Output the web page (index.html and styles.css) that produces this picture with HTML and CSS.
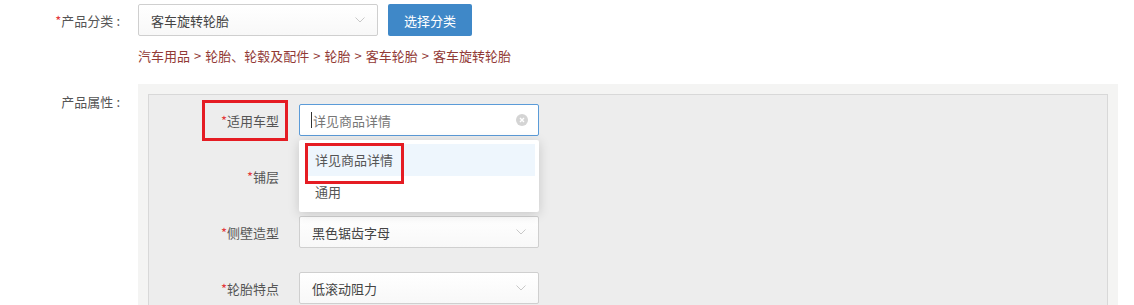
FILE: index.html
```html
<!DOCTYPE html>
<html lang="zh-CN">

<head>
  <meta charset="UTF-8">
  <meta name="viewport" content="width=device-width, initial-scale=1.0">
  <title>产品分类</title>
  <link rel="stylesheet" href="styles.css">
</head>

<body>
  <div class="row category-row">
    <label class="row-label"><i>*</i>产品分类<span class="colon">:</span></label>
    <div class="select wide">
      <span>客车旋转轮胎</span>
      <svg class="chevron" width="10" height="6" viewBox="0 0 10 6"><path d="M0.5 0.5 L5 5 L9.5 0.5" fill="none" stroke="#c8c8c8" stroke-width="1"/></svg>
    </div>
    <button class="btn-primary">选择分类</button>
  </div>
  <div class="crumbs">汽车用品<span class="sep">&gt;</span>轮胎、轮毂及配件<span class="sep">&gt;</span>轮胎<span class="sep">&gt;</span>客车轮胎<span class="sep">&gt;</span>客车旋转轮胎</div>

  <div class="row attr-row">
    <label class="row-label attr-label">产品属性<span class="colon">:</span></label>
    <div class="attr-outer">
      <div class="attr-inner">
        <div class="field">
          <div class="field-label"><i>*</i>适用车型<span class="mark mark-label"></span></div>
          <div class="field-control">
            <div class="select focused">
              <span class="caret"></span><span class="value-muted">详见商品详情</span>
              <span class="clear">
                <svg width="12" height="12" viewBox="0 0 12 12"><circle cx="6" cy="6" r="6" fill="#d4d4d4"/><path d="M4 4 L8 8 M8 4 L4 8" stroke="#fff" stroke-width="1.4"/></svg>
              </span>
            </div>
            <div class="dropdown">
              <div class="option active">详见商品详情</div>
              <div class="option">通用</div>
              <span class="mark mark-option"></span>
            </div>
          </div>
        </div>

        <div class="field">
          <div class="field-label"><i>*</i>铺层</div>
          <div class="field-control">
            <div class="select"><span></span></div>
          </div>
        </div>

        <div class="field">
          <div class="field-label"><i>*</i>侧壁造型</div>
          <div class="field-control">
            <div class="select">
              <span>黑色锯齿字母</span>
              <svg class="chevron" width="10" height="6" viewBox="0 0 10 6"><path d="M0.5 0.5 L5 5 L9.5 0.5" fill="none" stroke="#c8c8c8" stroke-width="1"/></svg>
            </div>
          </div>
        </div>

        <div class="field">
          <div class="field-label"><i>*</i>轮胎特点</div>
          <div class="field-control">
            <div class="select">
              <span>低滚动阻力</span>
              <svg class="chevron" width="10" height="6" viewBox="0 0 10 6"><path d="M0.5 0.5 L5 5 L9.5 0.5" fill="none" stroke="#c8c8c8" stroke-width="1"/></svg>
            </div>
          </div>
        </div>
      </div>
    </div>
  </div>
</body>

</html>
```

FILE: styles.css
```css
body {
  margin: 0;
  font-family: "Noto Sans CJK SC", "Noto Sans", sans-serif;
  font-size: 13px;
  color: #555;
  background-color: #fff;
  overflow: hidden;
}

i {
  font-style: normal;
  color: #e4393c;
}

.row {
  display: flex;
}

.category-row {
  align-items: center;
  margin-top: 4px;
}

.row-label {
  width: 120px;
  text-align: right;
  margin-right: 18px;
  white-space: nowrap;
}

.colon {
  margin-left: 3px;
}

.select {
  position: relative;
  box-sizing: border-box;
  display: flex;
  align-items: center;
  width: 240px;
  height: 32px;
  padding: 0 12px;
  border: 1px solid #cfcfcf;
  border-radius: 2px;
  background: linear-gradient(#fff, #f8f8f8);
  color: #444;
}

.select .chevron {
  position: absolute;
  right: 12px;
  top: 12px;
}

.btn-primary {
  box-sizing: border-box;
  height: 32px;
  width: 84px;
  margin-left: 10px;
  border: none;
  border-radius: 2px;
  background-color: #3f88c8;
  color: #fff;
  font-family: inherit;
  font-size: 13px;
  cursor: pointer;
}

.crumbs {
  margin-left: 138px;
  margin-top: 10px;
  line-height: 20px;
  color: #923a36;
}

.sep {
  margin: 0 4px;
}

.attr-row {
  margin-top: 18px;
}

.attr-label {
  line-height: 20px;
  padding-top: 8px;
}

.attr-outer {
  width: 980px;
  box-sizing: border-box;
  padding: 10px 10px 0;
  background-color: #f4f4f3;
}

.attr-inner {
  display: flex;
  flex-direction: column;
  gap: 24px;
  padding-top: 9px;
  height: 201px;
  overflow: hidden;
  border: 1px solid #d8d8d8;
  border-bottom: none;
  background-color: #ededed;
}

.field {
  display: flex;
  align-items: center;
  height: 32px;
  flex-shrink: 0;
}

.field-label {
  position: relative;
  width: 130px;
  margin-right: 20px;
  text-align: right;
  white-space: nowrap;
}

.field-control {
  position: relative;
}

.focused {
  border-color: #5b9bd8;
  background: #fff;
}

.caret {
  width: 1px;
  height: 16px;
  margin-right: 1px;
  margin-left: -1px;
  background-color: #333;
}

.value-muted {
  color: #777;
}

.clear {
  position: absolute;
  right: 10px;
  top: 9px;
  line-height: 0;
}

.dropdown {
  position: absolute;
  z-index: 5;
  left: 0;
  top: 36px;
  box-sizing: border-box;
  width: 240px;
  padding: 4px 4px 4px 6px;
  background-color: #fff;
  border-radius: 2px;
  box-shadow: 0 2px 12px rgba(0, 0, 0, 0.16);
}

.option {
  height: 32px;
  line-height: 32px;
  padding-left: 10px;
  color: #555;
}

.option.active {
  background-color: #eef6fd;
}

.mark {
  position: absolute;
  box-sizing: border-box;
  border: 3px solid #e51c23;
}

.mark-label {
  left: 53px;
  top: -11px;
  width: 86px;
  height: 41px;
}

.mark-option {
  left: 6px;
  top: 3px;
  width: 99px;
  height: 41px;
}
```
